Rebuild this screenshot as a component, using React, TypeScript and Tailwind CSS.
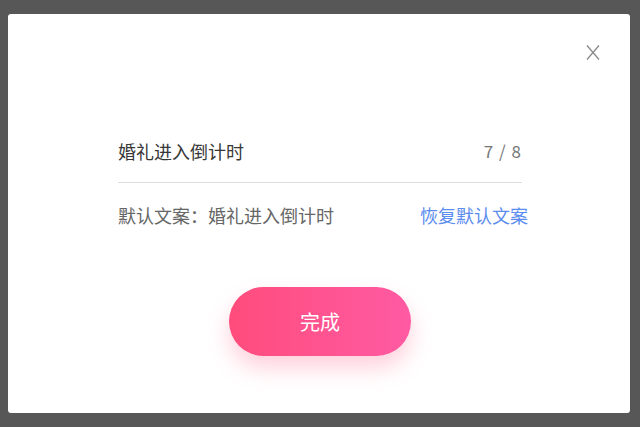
export default function App() {
  return (
    <div
      className="w-[640px] h-[427px] bg-[#575757] pt-[14px] pl-[8px] overflow-hidden"
      style={{ fontFamily: '"Noto Sans CJK SC", "Noto Sans", sans-serif' }}
    >
      <div className="relative w-[622px] h-[399px] bg-white rounded-[3px] flex flex-col pl-[110px] pr-[108px]">
        {/* Close button */}
        <button className="absolute right-[30px] top-[31px] w-[14px] h-[15px]" aria-label="关闭">
          <svg viewBox="0 0 14 15" className="w-[14px] h-[15px]">
            <path d="M1 0.5 L13 14.5 M13 0.5 L1 14.5" stroke="#8a8a8a" strokeWidth="1.3" fill="none" />
          </svg>
        </button>

        {/* Input row */}
        <div className="mt-[125px] pb-[19px] border-b border-[#dedede] flex items-center justify-between">
          <span className="text-[18px] leading-[24px] text-[#383838]">婚礼进入倒计时</span>
          <span className="text-[17px] leading-[24px] text-[#777] tracking-[1px]">7 / 8</span>
        </div>

        {/* Default text row */}
        <div className="mt-[20px] mr-[-6px] flex items-center justify-between">
          <span className="text-[18px] leading-[24px] text-[#666]">默认文案：婚礼进入倒计时</span>
          <span className="text-[18px] leading-[24px] text-[#5b8cf0] cursor-pointer">恢复默认文案</span>
        </div>

        {/* Done button */}
        <button className="self-center mt-[60px] w-[182px] h-[69px] rounded-full bg-gradient-to-r from-[#ff4c7c] to-[#ff5aa3] text-white text-[20px] shadow-[0_12px_22px_rgba(255,90,130,0.28)]">
          完成
        </button>
      </div>
    </div>
  );
}
